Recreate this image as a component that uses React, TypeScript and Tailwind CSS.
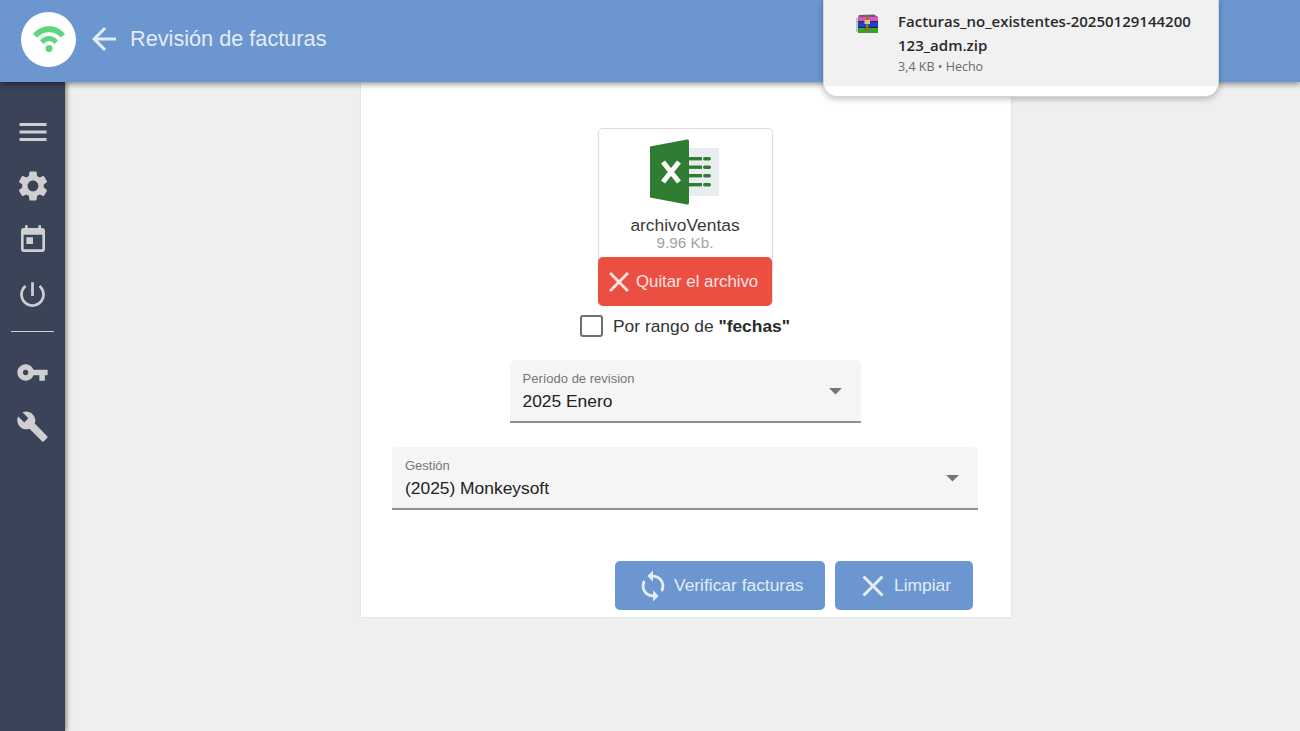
const ICONS = {
  menu: 'M3 18h18v-2H3v2zm0-5h18v-2H3v2zm0-7v2h18V6H3z',
  settings:
    'M19.14 12.94c.04-.3.06-.61.06-.94 0-.32-.02-.64-.07-.94l2.03-1.58c.18-.14.23-.41.12-.61l-1.92-3.32c-.12-.22-.37-.29-.59-.22l-2.39.96c-.5-.38-1.03-.7-1.62-.94l-.36-2.54c-.04-.24-.24-.41-.48-.41h-3.84c-.24 0-.43.17-.47.41l-.36 2.54c-.59.24-1.13.57-1.62.94l-2.39-.96c-.22-.08-.47 0-.59.22L2.74 8.87c-.12.21-.08.47.12.61l2.03 1.58c-.05.3-.09.63-.09.94s.02.64.07.94l-2.03 1.58c-.18.14-.23.41-.12.61l1.92 3.32c.12.22.37.29.59.22l2.39-.96c.5.38 1.03.7 1.62.94l.36 2.54c.05.24.24.41.48.41h3.84c.24 0 .44-.17.47-.41l.36-2.54c.59-.24 1.13-.56 1.62-.94l2.39.96c.22.08.47 0 .59-.22l1.92-3.32c.12-.22.07-.47-.12-.61l-2.01-1.58zM12 15.6c-1.98 0-3.6-1.62-3.6-3.6s1.62-3.6 3.6-3.6 3.6 1.62 3.6 3.6-1.62 3.6-3.6 3.6z',
  today:
    'M19 3h-1V1h-2v2H8V1H6v2H5c-1.11 0-1.99.9-1.99 2L3 19c0 1.1.89 2 2 2h14c1.1 0 2-.9 2-2V5c0-1.1-.9-2-2-2zm0 16H5V8h14v11zM7 10h5v5H7z',
  power:
    'M13 3h-2v10h2V3zm4.83 2.17l-1.42 1.42C17.99 7.86 19 9.81 19 12c0 3.87-3.13 7-7 7s-7-3.13-7-7c0-2.19 1.01-4.14 2.58-5.42L6.17 5.17C4.23 6.82 3 9.26 3 12c0 4.97 4.03 9 9 9s9-4.03 9-9c0-2.74-1.23-5.18-3.17-6.83z',
  key: 'M12.65 10C11.83 7.67 9.61 6 7 6c-3.31 0-6 2.69-6 6s2.69 6 6 6c2.61 0 4.83-1.67 5.65-4H17v4h4v-4h2v-4H12.65zM7 14c-1.1 0-2-.9-2-2s.9-2 2-2 2 .9 2 2-.9 2-2 2z',
  build:
    'M22.7 19l-9.1-9.1c.9-2.3.4-5-1.5-6.9-2-2-5-2.4-7.4-1.3L9 6 6 9 1.6 4.7C.4 7.1.9 10.1 2.9 12.1c1.9 1.9 4.6 2.4 6.9 1.5l9.1 9.1c.4.4 1 .4 1.4 0l2.3-2.3c.5-.4.5-1.1.1-1.4z',
  back: 'M20 11H7.83l5.59-5.59L12 4l-8 8 8 8 1.41-1.41L7.83 13H20v-2z',
  close:
    'M19 6.41L17.59 5 12 10.59 6.41 5 5 6.41 10.59 12 5 17.59 6.41 19 12 13.41 17.59 19 19 17.59 13.41 12 19 6.41z',
  sync: 'M12 4V1L8 5l4 4V6c3.31 0 6 2.69 6 6 0 1.01-.25 1.97-.7 2.8l1.46 1.46C19.54 15.03 20 13.57 20 12c0-4.42-3.58-8-8-8zm0 14c-3.31 0-6-2.69-6-6 0-1.01.25-1.97.7-2.8L5.24 7.74C4.46 8.97 4 10.43 4 12c0 4.42 3.58 8 8 8v3l4-4-4-4v3z',
  drop: 'M7 10l5 5 5-5z',
};

function Icon({ d, className }: { d: string; className: string }) {
  return (
    <svg viewBox="0 0 24 24" fill="currentColor" className={className}>
      <path d={d} />
    </svg>
  );
}

function ExcelLogo() {
  const rows = [18, 26.5, 35, 44];
  return (
    <svg viewBox="0 0 70 66" className="h-[66px] w-[70px]">
      <rect x="39" y="9" width="30" height="48" rx="1" fill="#e9edf0" />
      <path d="M0 7.5 L37 0.5 Q39 0 39 2 V64 Q39 66 37 65.5 L0 58.5 Z" fill="#2e7d32" />
      <path d="M13 23 L29 43 M29 23 L13 43" stroke="#fff" strokeWidth="5" fill="none" />
      <g fill="#2e7d32">
        {rows.map((y) => (
          <g key={y}>
            <rect x="39" y={y} width="13" height="3.4" />
            <rect x="53" y={y} width="8" height="3.4" rx="1.7" />
          </g>
        ))}
      </g>
    </svg>
  );
}

function RarIcon() {
  return (
    <svg viewBox="0 0 22 19" className="mt-[5px] h-[19px] w-[22px] shrink-0">
      <path d="M3 1 L18 0.5 L22 3 L22 7 L1 7 Z" fill="#6b5a7a" />
      <rect x="2" y="3" width="20" height="4" fill="#e24fc0" />
      <rect x="0" y="4" width="2" height="14" fill="#b9c2cf" />
      <rect x="2" y="7" width="20" height="1" fill="#2b2b33" />
      <rect x="2" y="8" width="20" height="5" fill="#1f3fd0" />
      <rect x="2" y="13" width="20" height="1" fill="#1a2a1a" />
      <rect x="2" y="14" width="20" height="5" fill="#3aa02e" />
      <rect x="10" y="1" width="2.5" height="18" fill="#9a6a2a" />
      <rect x="8.5" y="6" width="5.5" height="4" fill="#d9c48a" />
    </svg>
  );
}

function SelectField({ label, value, className }: { label: string; value: string; className: string }) {
  return (
    <div className={`relative h-[63px] rounded-t-[5px] border-b-2 border-[#8f8f8f] bg-[#f5f5f5] pl-[13px] pt-[11px] ${className}`}>
      <div className="text-[13px] leading-[16px] text-[#757575]">{label}</div>
      <div className="mt-[2px] text-[17.4px] leading-[24px] text-[#222]">{value}</div>
      <Icon d={ICONS.drop} className="absolute right-[10px] top-[15px] h-[31px] w-[31px] text-[#757575]" />
    </div>
  );
}

const navTop = [
  { d: ICONS.menu, size: 'h-[36px] w-[36px]' },
  { d: ICONS.settings, size: 'h-[36px] w-[36px]' },
  { d: ICONS.today, size: 'h-[32px] w-[32px]' },
  { d: ICONS.power, size: 'h-[33px] w-[33px]' },
];
const navBottom = [
  { d: ICONS.key, size: 'h-[33px] w-[33px]' },
  { d: ICONS.build, size: 'h-[33px] w-[33px]' },
];

function NavIcon({ d, size }: { d: string; size: string }) {
  return (
    <div className="flex h-[36px] w-[36px] items-center justify-center">
      <Icon d={d} className={size} />
    </div>
  );
}

export default function App() {
  return (
    <div className="relative flex h-[731px] w-[1300px] flex-col overflow-hidden bg-[#efefef] font-['Liberation_Sans',sans-serif]">
      {/* Header */}
      <header className="relative z-20 flex h-[82px] shrink-0 items-center bg-[#6b96d0] pb-[4px] pl-[21px] shadow-[0_2px_6px_rgba(0,0,0,0.45)]">
        <div className="flex h-[55px] w-[55px] items-center justify-center rounded-full bg-white">
          <svg viewBox="0 0 32 26" className="h-[26px] w-[32px]" fill="#5ed47c">
            <path d="M0 8 C8 -2.5 24 -2.5 32 8 L28 11.5 C21 4.5 11 4.5 4 11.5 Z" />
            <path d="M7 14.5 C12 8.5 20 8.5 25 14.5 L21.5 18 C18 14 14 14 10.5 18 Z" />
            <circle cx="16" cy="22.5" r="3.5" />
          </svg>
        </div>
        <Icon d={ICONS.back} className="ml-[10px] h-[36px] w-[36px] text-[#e4ecf7]" />
        <h1 className="-mt-[1px] ml-[8px] text-[21.7px] leading-[28px] text-[#e4ecf7]">Revisión de facturas</h1>
      </header>

      <div className="flex min-h-0 flex-1">
        {/* Sidebar */}
        <aside className="z-10 flex w-[65px] shrink-0 flex-col items-center bg-[#3a4358] pt-[32px] text-[#cfcfcf] shadow-[1px_0_5px_rgba(0,0,0,0.55)]">
          <div className="flex flex-col gap-[18px]">
            {navTop.map((i) => (
              <NavIcon key={i.d} d={i.d} size={i.size} />
            ))}
          </div>
          <div className="mb-[22px] mt-[19px] h-px w-[43px] bg-[#cfcfcf]" />
          <div className="flex flex-col gap-[18px]">
            {navBottom.map((i) => (
              <NavIcon key={i.d} d={i.d} size={i.size} />
            ))}
          </div>
        </aside>

        {/* Main */}
        <main className="min-w-0 flex-1 pl-[296px]">
          <div className="flex h-[535px] w-[650px] flex-col items-center bg-white pr-[2px] pt-[46px] shadow-[0_0_2px_rgba(0,0,0,0.12)]">
            <div className="flex h-[178px] w-[175px] flex-col items-center rounded-[5px] border border-b-0 border-[#dcdcdc] pt-[10px]">
              <ExcelLogo />
              <div className="mt-[9px] text-[17.4px] leading-[22px] text-[#3a3a3a]">archivoVentas</div>
              <div className="-mt-[1px] text-[15.3px] leading-[15px] text-[#a3a3a3]">9.96 Kb.</div>
              <button className="mt-[7px] flex h-[49px] w-[174px] items-center justify-start rounded-[5px] bg-[#eb4f41] pl-[4px] text-[16.8px] text-[#fde4e1]">
                <Icon d={ICONS.close} className="h-[34px] w-[34px]" />
                Quitar el archivo
              </button>
            </div>

            <label className="mt-[8px] flex h-[24px] items-center">
              <span className="h-[22px] w-[23px] rounded-[3px] border-2 border-[#6f6f6f]" />
              <span className="ml-[10px] text-[17.4px] text-[#333]">
                Por rango de <b className="text-[#2a2a2a]">"fechas"</b>
              </span>
            </label>

            <SelectField label="Período de revision" value="2025 Enero" className="mt-[22px] w-[351px] self-center" />
            <SelectField label="Gestión" value="(2025) Monkeysoft" className="mt-[24px] w-[586px]" />

            <div className="mt-[51px] flex gap-[10px] self-end pr-[36px]">
              <button className="flex h-[49px] w-[210px] items-center justify-start gap-[4px] rounded-[5px] bg-[#6b96d0] pl-[21px] text-[17.4px] text-[#e4ecf7]">
                <Icon d={ICONS.sync} className="h-[34px] w-[34px]" />
                Verificar facturas
              </button>
              <button className="flex h-[49px] w-[138px] items-center justify-start gap-[3px] rounded-[5px] bg-[#6b96d0] pl-[20px] text-[17.4px] text-[#e4ecf7]">
                <Icon d={ICONS.close} className="h-[36px] w-[36px]" />
                Limpiar
              </button>
            </div>
          </div>
        </main>
      </div>

      {/* Browser download popup */}
      <div className="absolute left-[823px] top-0 z-30 h-[97px] w-[396px] overflow-hidden rounded-b-[14px] border border-t-0 border-[#d6d6d6] bg-white font-['Open_Sans',sans-serif] shadow-[0_2px_6px_rgba(0,0,0,0.25)]">
        <div className="flex h-[86px] bg-[#f1f1f1] pl-[32px] pt-[9px]">
          <RarIcon />
          <div className="ml-[20px] w-[310px]">
            <div className="break-all text-[15px] font-semibold leading-[24px] text-[#2a2a2a]">
              Facturas_no_existentes-20250129144200
              <br />
              123_adm.zip
            </div>
            <div className="mt-[1px] text-[12.5px] leading-[18px] text-[#6a6a6a]">3,4 KB • Hecho</div>
          </div>
        </div>
      </div>
    </div>
  );
}
